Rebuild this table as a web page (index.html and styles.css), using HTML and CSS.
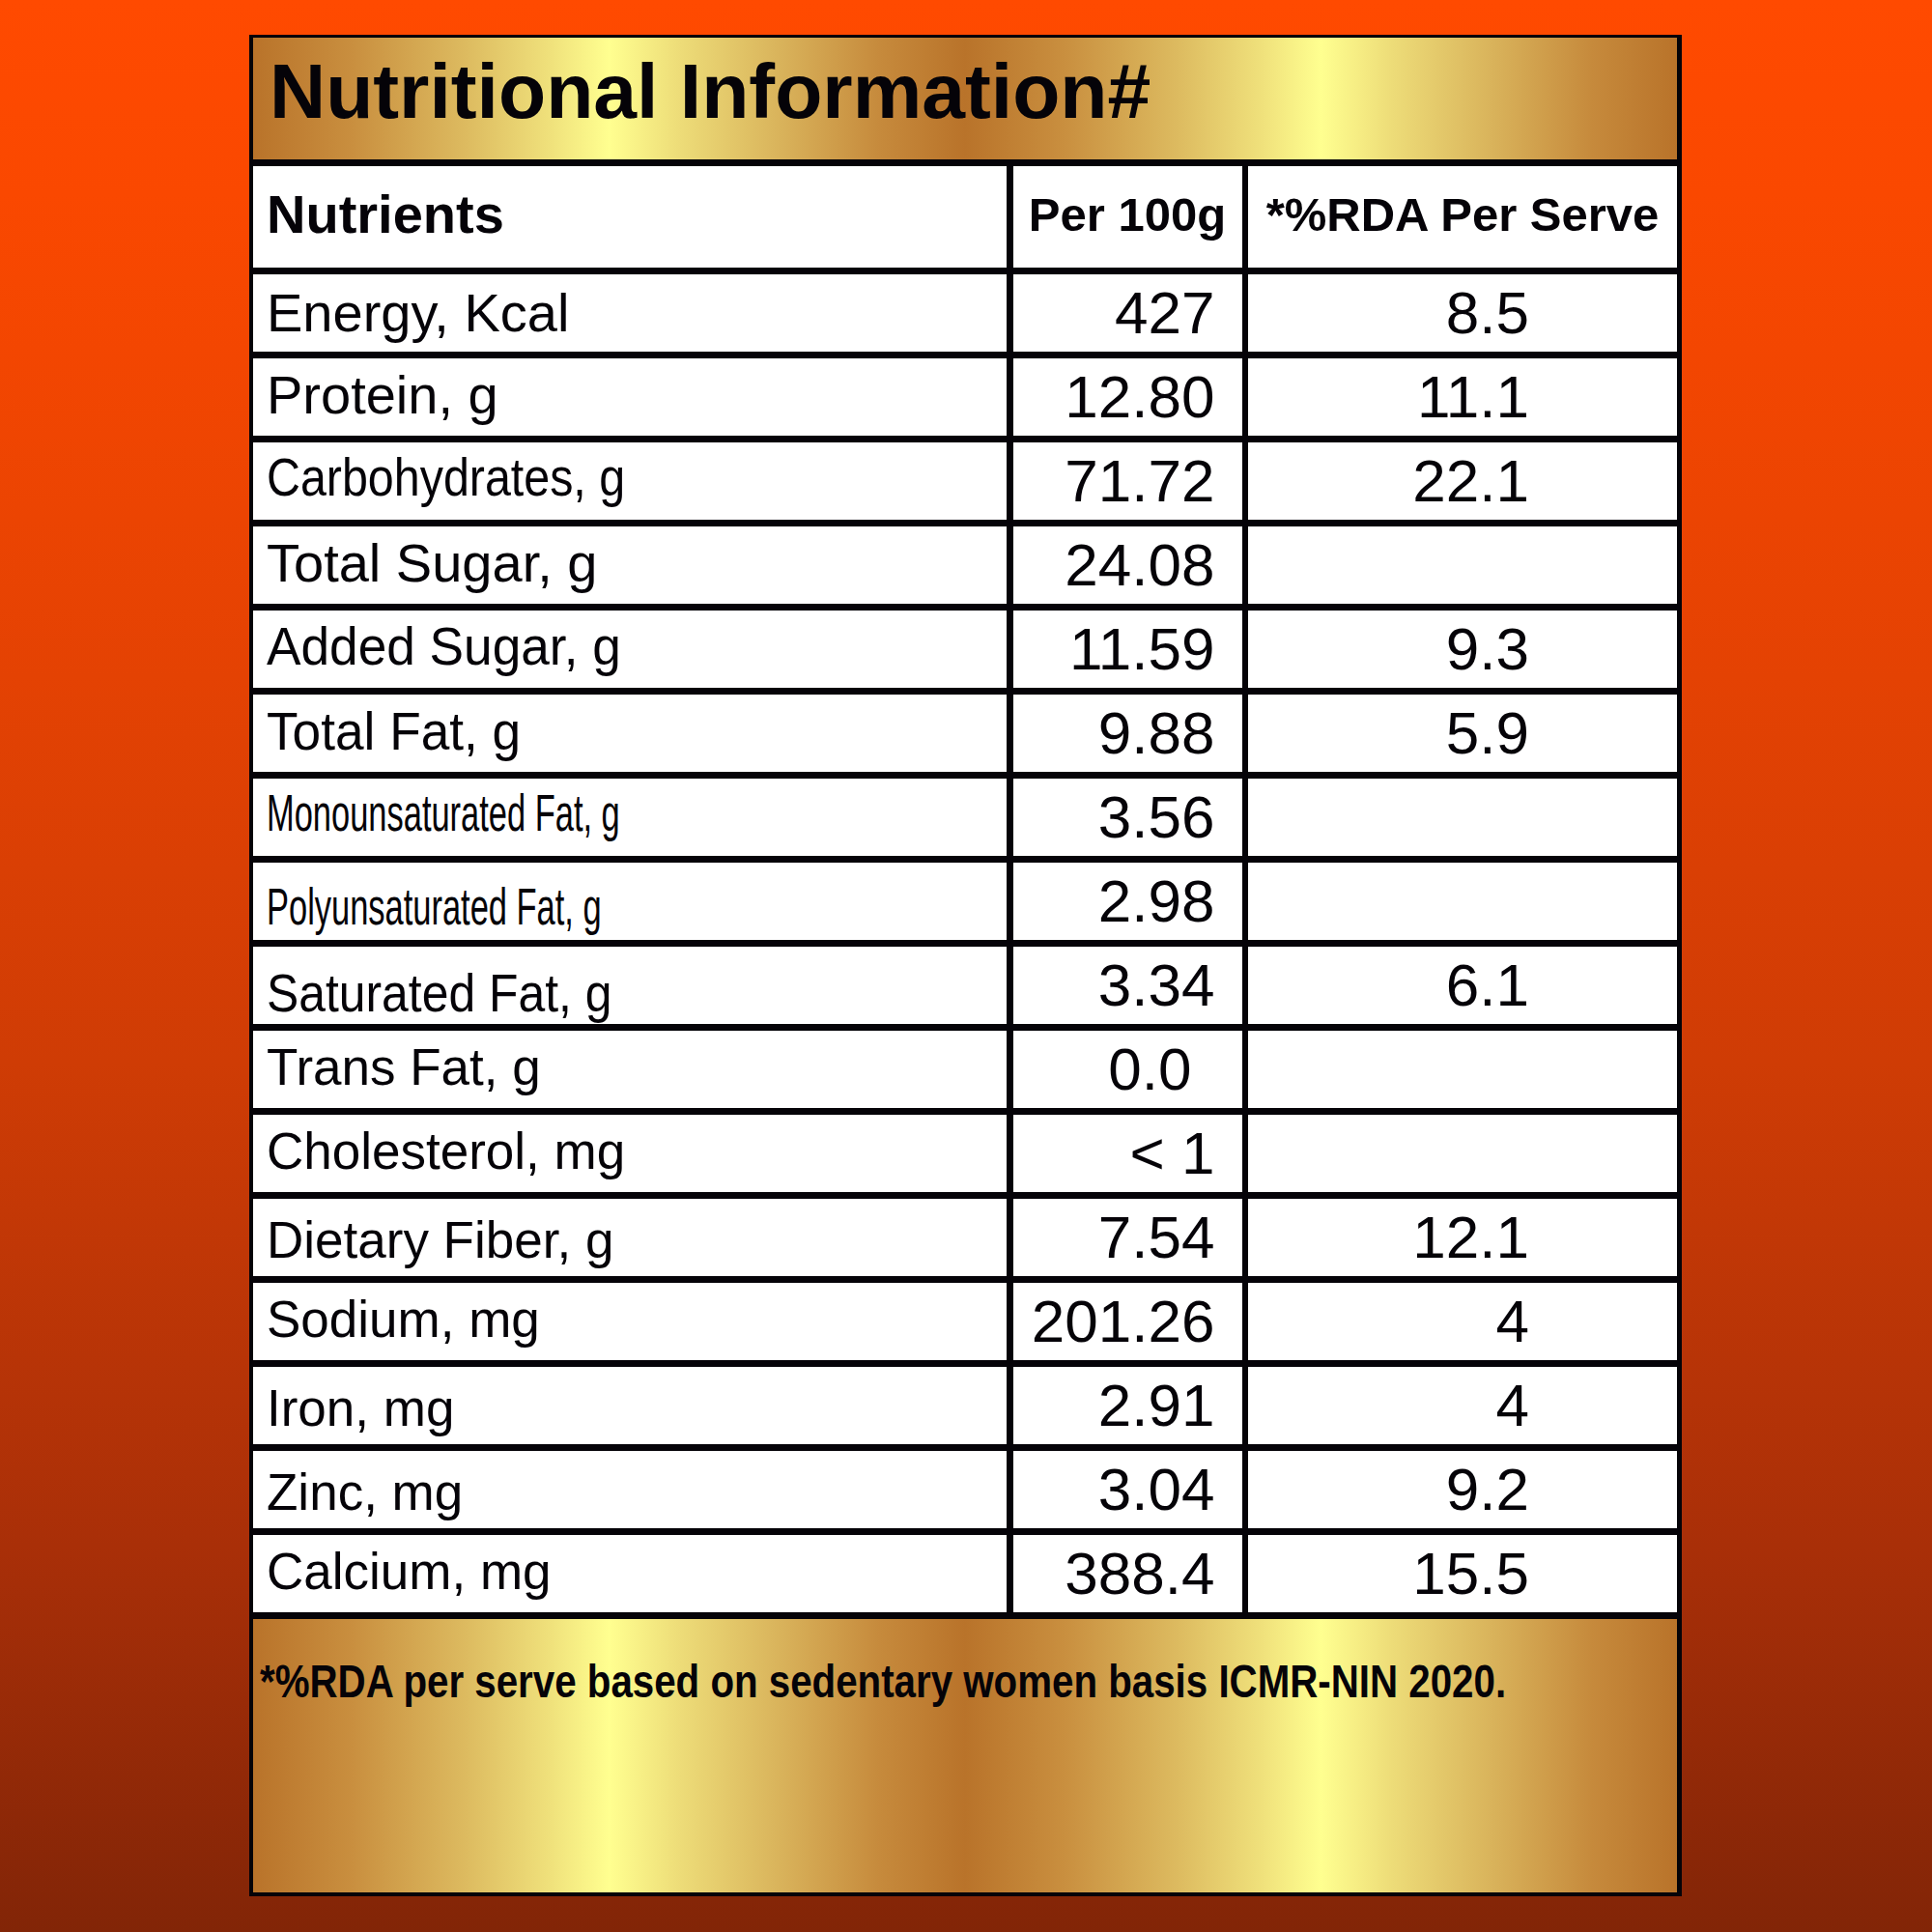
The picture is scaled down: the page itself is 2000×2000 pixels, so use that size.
FILE: index.html
```html
<!DOCTYPE html>
<html lang="en">
<head>
<meta charset="utf-8">
<title>Nutritional Information</title>
<link rel="stylesheet" href="styles.css">
</head>
<body>
<main class="panel">
  <header class="title gold">
    <h1>Nutritional Information#</h1>
  </header>
  <section class="table">
    <div class="cell lab head">Nutrients</div>
    <div class="cell ctr head">Per 100g</div>
    <div class="cell ctr head">*%RDA Per Serve</div>

    <div class="cell lab">Energy, Kcal</div>
    <div class="cell val">427</div>
    <div class="cell rda">8.5</div>

    <div class="cell lab up2">Protein, g</div>
    <div class="cell val">12.80</div>
    <div class="cell rda">11.1</div>

    <div class="cell lab up4"><span class="sq s86">Carbohydrates, g</span></div>
    <div class="cell val">71.72</div>
    <div class="cell rda">22.1</div>

    <div class="cell lab up2">Total Sugar, g</div>
    <div class="cell val">24.08</div>
    <div class="cell rda"></div>

    <div class="cell lab up3"><span class="sq s95">Added Sugar, g</span></div>
    <div class="cell val">11.59</div>
    <div class="cell rda">9.3</div>

    <div class="cell lab up2"><span class="sq s95">Total Fat, g</span></div>
    <div class="cell val">9.88</div>
    <div class="cell rda">5.9</div>

    <div class="cell lab small up4"><span class="sq s65">Monounsaturated Fat, g</span></div>
    <div class="cell val">3.56</div>
    <div class="cell rda"></div>

    <div class="cell lab small dn5"><span class="sq s65">Polyunsaturated Fat, g</span></div>
    <div class="cell val">2.98</div>
    <div class="cell rda"></div>

    <div class="cell lab dn8"><span class="sq s89">Saturated Fat, g</span></div>
    <div class="cell val">3.34</div>
    <div class="cell rda">6.1</div>

    <div class="cell lab lower up2">Trans Fat, g</div>
    <div class="cell val zero">0.0</div>
    <div class="cell rda"></div>

    <div class="cell lab lower up2">Cholesterol, mg</div>
    <div class="cell val">&lt; 1</div>
    <div class="cell rda"></div>

    <div class="cell lab lower dn3">Dietary Fiber, g</div>
    <div class="cell val">7.54</div>
    <div class="cell rda">12.1</div>

    <div class="cell lab lower up2">Sodium, mg</div>
    <div class="cell val">201.26</div>
    <div class="cell rda">4</div>

    <div class="cell lab lower dn3">Iron, mg</div>
    <div class="cell val">2.91</div>
    <div class="cell rda">4</div>

    <div class="cell lab lower dn3">Zinc, mg</div>
    <div class="cell val">3.04</div>
    <div class="cell rda">9.2</div>

    <div class="cell lab lower up2">Calcium, mg</div>
    <div class="cell val">388.4</div>
    <div class="cell rda">15.5</div>
  </section>
  <footer class="foot gold">
    <p><span class="note">*%RDA per serve based on sedentary women basis ICMR-NIN 2020.</span></p>
  </footer>
</main>
</body>
</html>
```

FILE: styles.css
```css
* {
  box-sizing: border-box;
}

html, body {
  margin: 0;
  padding: 0;
}

body {
  width: 2000px;
  min-height: 2000px;
  padding-top: 36px;
  padding-left: 258px;
  font-family: "Liberation Sans", Arial, sans-serif;
  color: #050308;
  background: linear-gradient(to bottom,
    #ff4a00 0%,
    #fa4800 10%,
    #e44203 35%,
    #cf3c05 55%,
    #a92f08 80%,
    #822507 100%);
}

.panel {
  width: 1483px;
  border-style: solid;
  border-color: #050308;
  border-width: 3px 5px 4px 4px;
  display: flex;
  flex-direction: column;
}

.gold {
  background: linear-gradient(to right,
    #b9732a 0%,
    #c98f3f 7%,
    #ddbb60 15%,
    #f0e27c 21%,
    #ffff90 25%,
    #eddc78 30%,
    #d9b35b 37%,
    #c68a3c 44%,
    #b9732a 50%,
    #c98f3f 57%,
    #ddbb60 65%,
    #f0e27c 71%,
    #ffff90 75%,
    #eddc78 80%,
    #d9b35b 87%,
    #c68a3c 94%,
    #b9732a 100%);
}

.title {
  height: 126px;
  padding: 15px 0 31px 17px;
}

.title h1 {
  margin: 0;
  font-size: 80.5px;
  line-height: 80px;
  font-weight: bold;
  white-space: nowrap;
}

.table {
  display: grid;
  grid-template-columns: 780px 237px 444px;
  grid-template-rows: 105px repeat(16, 80.5px);
  column-gap: 6.5px;
  row-gap: 6.5px;
  padding: 7px 0;
  background: #050308;
}

.cell {
  background: #ffffff;
  display: flex;
  align-items: center;
  white-space: nowrap;
  overflow: hidden;
}

.head {
  font-weight: bold;
  font-size: 49px;
  padding-bottom: 5px;
}

.lab {
  justify-content: flex-start;
  padding-left: 14px;
  font-size: 56px;
}

.lab.head {
  font-size: 56px;
  padding-bottom: 7px;
}

.ctr {
  justify-content: center;
}

.lab.lower {
  font-size: 53px;
}

.lab.small {
  font-size: 53px;
}

.val, .rda {
  justify-content: flex-end;
  font-size: 62px;
}

.val {
  padding-right: 28px;
}

.val.zero {
  padding-right: 52px;
}

.rda {
  padding-right: 153px;
}

.sq {
  display: inline-block;
  transform-origin: 0 50%;
}

.s95 { transform: scaleX(0.95); }
.s89 { transform: scaleX(0.89); }
.s86 { transform: scaleX(0.864); }
.s65 { transform: scaleX(0.65); }

.up2 { padding-bottom: 4px; }
.up3 { padding-bottom: 6px; }
.up4 { padding-bottom: 9px; }
.dn3 { padding-top: 6px; }
.dn5 { padding-top: 11px; }
.dn8 { padding-top: 15px; }

.foot {
  height: 283px;
  padding: 36px 0 0 7px;
}

.foot p {
  margin: 0;
  font-size: 49px;
  line-height: 56px;
  font-weight: bold;
  white-space: nowrap;
}

.note {
  display: inline-block;
  transform: scaleX(0.822);
  transform-origin: 0 50%;
}
```
